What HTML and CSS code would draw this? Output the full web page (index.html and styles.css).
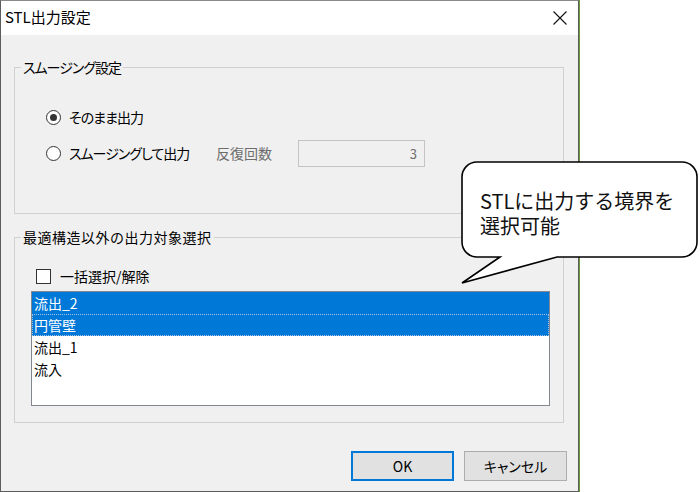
FILE: index.html
```html
<!DOCTYPE html>
<html lang="ja">
<head>
    <meta charset="UTF-8">
    <title>STL出力設定</title>
    <link rel="stylesheet" href="styles.css">
</head>
<body>
    <div class="dialog">
        <div class="titlebar">
            <span class="title">STL出力設定</span>
            <svg class="close" width="14" height="14" viewBox="0 0 14 14">
                <path d="M0.5 0.5 L13.5 13.5 M13.5 0.5 L0.5 13.5" stroke="#111" stroke-width="1.1" fill="none"/>
            </svg>
        </div>

        <div class="content">
            <!-- スムージング設定 -->
            <fieldset class="group">
                <legend class="tight">スムージング設定</legend>
                <div class="group-body smooth-body">
                    <label class="option"><span class="radio checked"></span><span class="tight">そのまま出力</span></label>
                    <div class="option-row">
                        <label class="option option-wide"><span class="radio"></span><span class="tight">スムージングして出力</span></label>
                        <span class="field-label">反復回数</span>
                        <input class="count" type="text" value="3" disabled>
                    </div>
                </div>
            </fieldset>

            <!-- 出力対象選択 -->
            <fieldset class="group group-target">
                <legend class="wide">最適構造以外の出力対象選択</legend>
                <div class="group-body target-body">
                    <label class="check-row"><span class="checkbox"></span>一括選択/解除</label>
                    <div class="listbox">
                        <div class="list-item selected">流出_2</div>
                        <div class="list-item selected focused">円管壁</div>
                        <div class="list-item">流出_1</div>
                        <div class="list-item">流入</div>
                    </div>
                </div>
            </fieldset>

            <div class="buttons">
                <button class="btn btn-default">OK</button>
                <button class="btn">キャンセル</button>
            </div>
        </div>
    </div>

    <!-- 吹き出し -->
    <div class="callout">
        <svg class="callout-shape" width="240" height="126" viewBox="0 0 240 126">
            <path d="M17 2 H222 A15 15 0 0 1 237 17 V82 A15 15 0 0 1 222 97 H97 L2 123 L40 97 H17 A15 15 0 0 1 2 82 V17 A15 15 0 0 1 17 2 Z"
                  fill="#fff" stroke="#000" stroke-width="1.6" stroke-linejoin="miter"/>
        </svg>
        <p class="callout-text">STLに出力する境界を<br>選択可能</p>
    </div>
</body>
</html>
```

FILE: styles.css
```css
body {
    margin: 0;
    padding: 0;
    background: #fff;
    font-family: "Noto Sans CJK JP", "Noto Sans", sans-serif;
    font-size: 14px;
    color: #000;
    position: relative;
    width: 700px;
    height: 492px;
    overflow: hidden;
}

.dialog {
    width: 579px;
    height: 492px;
    box-sizing: border-box;
    border: 1px solid #5c5c5c;
    border-top-color: #8a8a8a;
    box-shadow: 1px 0 0 #6f9a3c;
    background: #f0f0f0;
    display: flex;
    flex-direction: column;
}

.titlebar {
    height: 34px;
    background: #fff;
    display: flex;
    align-items: center;
    justify-content: space-between;
    padding: 0 11px 0 4px;
}

.title {
    font-size: 15px;
    line-height: 20px;
    font-feature-settings: "palt";
    margin-top: -2px;
}

.close {
    display: block;
    margin-top: -1px;
}

.content {
    padding: 0 11px 0 13px;
}

.tight {
    font-feature-settings: "palt";
    letter-spacing: -1px;
}

.wide {
    letter-spacing: 0.5px;
}

.group {
    margin: 22px 0 0 0;
    padding: 0;
    width: 550px;
    box-sizing: border-box;
    border: 1px solid #d0d0d0;
    min-width: 0;
}

.group legend {
    margin-left: 6px;
    padding: 0 2px;
    line-height: 20px;
}

.group-target {
    margin-top: 13px;
}

.group-body {
    padding-left: 31px;
}

.smooth-body {
    padding-top: 27px;
    padding-bottom: 47px;
    display: flex;
    flex-direction: column;
    gap: 10px;
}

.option {
    display: flex;
    align-items: center;
    gap: 8px;
    height: 26px;
    line-height: 20px;
}

.option-row {
    display: flex;
    align-items: center;
    height: 26px;
}

.option-wide {
    width: 170px;
}

.radio {
    width: 15px;
    height: 15px;
    box-sizing: border-box;
    border: 1px solid #333;
    border-radius: 50%;
    background: #fff;
    display: flex;
    align-items: center;
    justify-content: center;
}

.radio.checked::after {
    content: "";
    width: 7px;
    height: 7px;
    border-radius: 50%;
    background: #333;
}

.field-label {
    width: 82px;
    color: #6d6d6d;
    line-height: 20px;
}

.count {
    width: 127px;
    height: 27px;
    box-sizing: border-box;
    border: 1px solid #c4c4c4;
    background: #f0f0f0;
    color: #6d6d6d;
    text-align: right;
    padding: 0 7px 0 0;
    font-family: inherit;
    font-size: 13px;
}

.target-body {
    padding-left: 16px;
    padding-top: 19px;
    padding-bottom: 16px;
}

.check-row {
    display: flex;
    align-items: center;
    gap: 9px;
    height: 20px;
    padding-left: 5px;
    line-height: 20px;
}

.checkbox {
    width: 15px;
    height: 15px;
    box-sizing: border-box;
    border: 1px solid #333;
    background: #fff;
}

.listbox {
    margin-top: 5px;
    width: 519px;
    height: 115px;
    box-sizing: border-box;
    border: 1px solid #828790;
    background: #fff;
}

.list-item {
    height: 22px;
    line-height: 22px;
    padding-left: 2px;
}

.list-item.selected {
    background: #0078d7;
    color: #fff;
}

.list-item.focused {
    outline: 1px dotted #9cc3e6;
    outline-offset: -1px;
}

.buttons {
    margin-top: 28px;
    display: flex;
    justify-content: flex-end;
    gap: 10px;
}

.btn {
    width: 103px;
    height: 30px;
    box-sizing: border-box;
    border: 1px solid #adadad;
    background: #e1e1e1;
    font-family: inherit;
    font-size: 14px;
    color: #000;
    padding: 0;
    font-feature-settings: "palt";
}

.btn-default {
    border: 2px solid #0078d7;
}

/* 吹き出し */
.callout {
    position: absolute;
    left: 460px;
    top: 160px;
    width: 240px;
    height: 126px;
}

.callout-shape {
    position: absolute;
    left: 0;
    top: 0;
}

.callout-text {
    position: relative;
    margin: 0;
    padding: 28px 0 0 20px;
    font-size: 20px;
    line-height: 25px;
    color: #111;
}
```
